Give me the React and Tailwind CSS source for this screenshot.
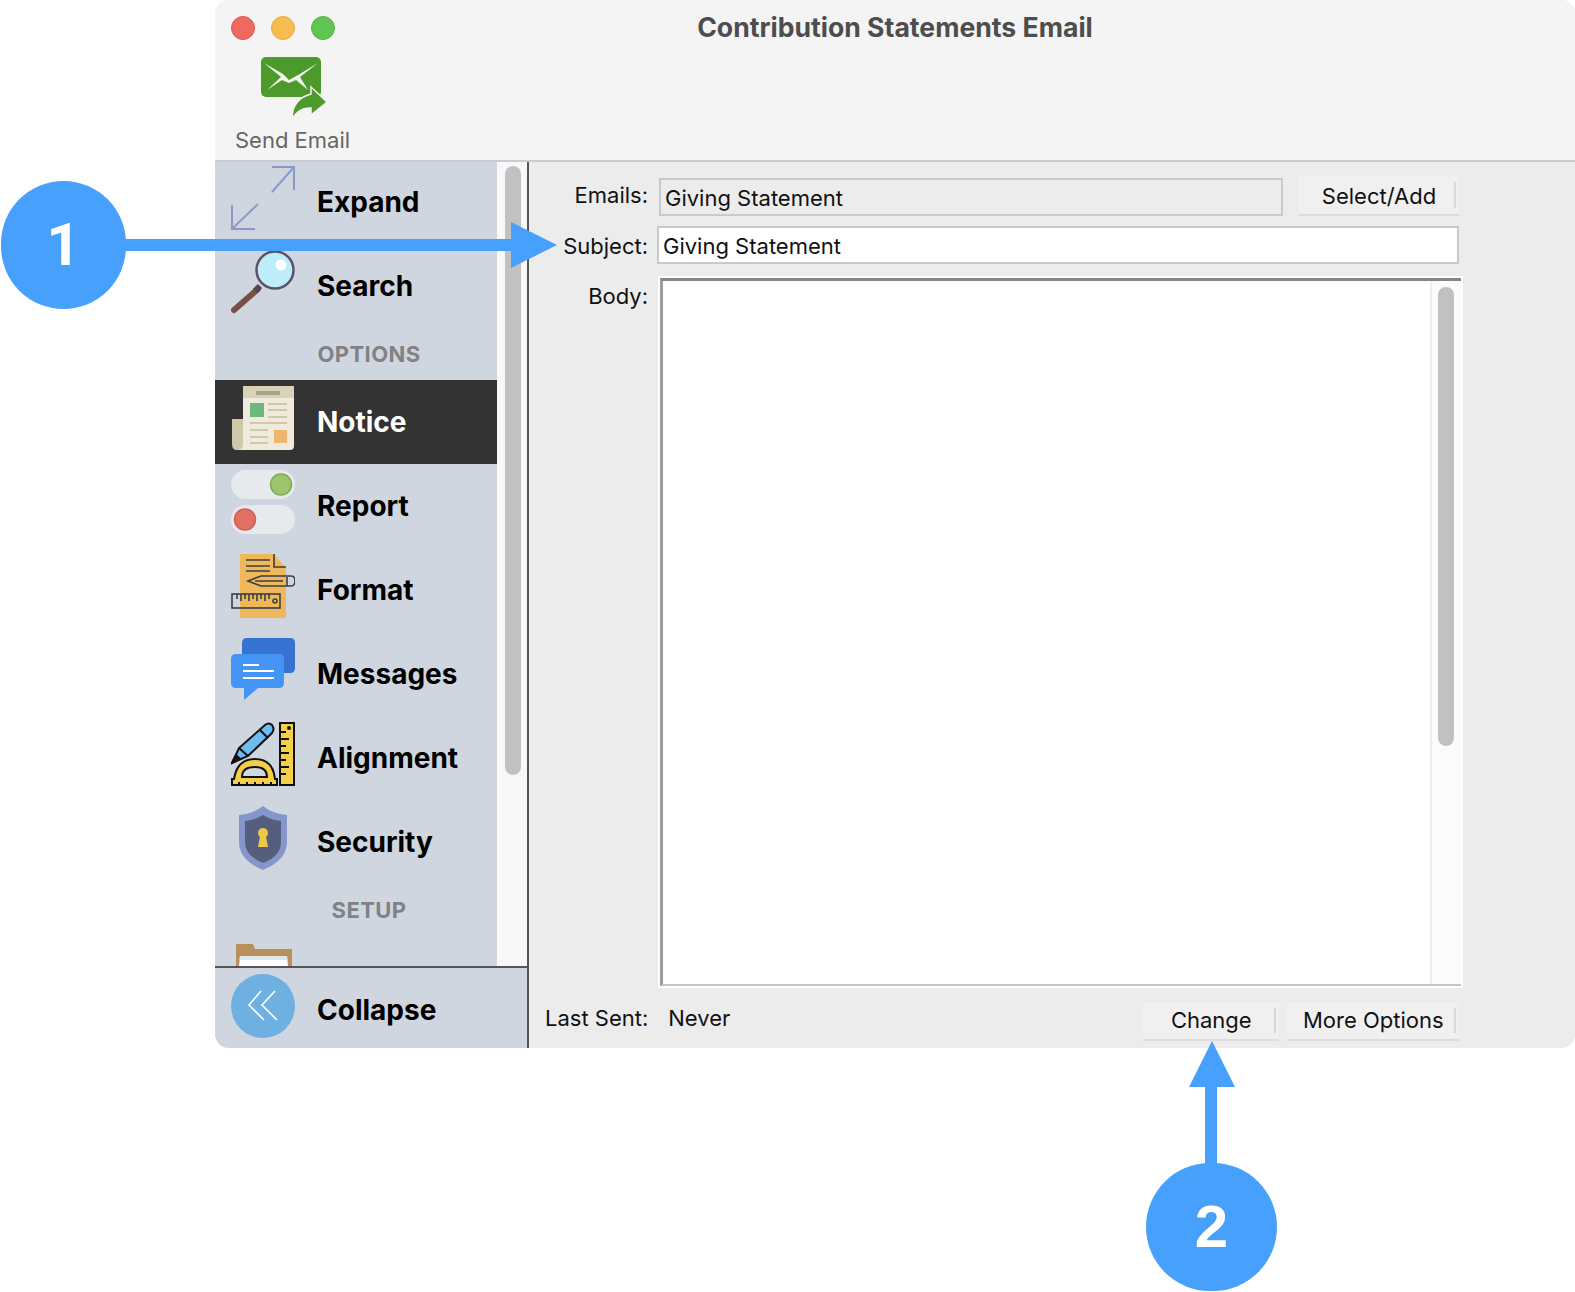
import React from 'react';

const ExpandIcon = () => (
  <svg width="64" height="64" viewBox="0 0 64 64" fill="none" stroke="#8a98cc" strokeWidth="2">
    <path d="M41 26 L63 1 M41 1 H63 V24" />
    <path d="M27 38 L1 63 M1 39 V63 H24" />
  </svg>
);

const SearchIcon = () => (
  <svg width="64" height="64" viewBox="0 0 64 64" fill="none">
    <path d="M3 60 L27 39" stroke="#7a4f45" strokeWidth="6" strokeLinecap="round" />
    <path d="M24 41 L29 36" stroke="#4f4650" strokeWidth="6" />
    <circle cx="44" cy="20" r="18.5" fill="#bdecfb" stroke="#5b5266" strokeWidth="2.5" />
    <circle cx="50" cy="15" r="5.5" fill="#ffffff" />
  </svg>
);

const NoticeIcon = () => (
  <svg width="64" height="64" viewBox="0 0 64 64" fill="none">
    <path d="M1 33 H14 V64 H6 Q1 64 1 58 Z" fill="#cfc9ac" />
    <path d="M12 0 H63 V60 Q63 64 59 64 H6 Q12 64 12 58 Z" fill="#efeadb" />
    <path d="M12 0 H63 V12 H12 Z" fill="#d8d2b6" />
    <rect x="25" y="5" width="24" height="4" fill="#a9a48e" />
    <rect x="19" y="17" width="14" height="14" fill="#6eb87e" />
    <rect x="43" y="44" width="13" height="13" fill="#eeb66e" />
    <path d="M37 18 H56 M37 24 H56 M37 31 H56 M19 37 H56 M19 44 H37 M19 51 H37 M19 57 H37" stroke="#cfc9ac" strokeWidth="2" />
  </svg>
);

const ReportIcon = () => (
  <svg width="64" height="64" viewBox="0 0 64 64" fill="none">
    <rect x="0" y="0" width="64" height="29" rx="14.5" fill="#e6eaec" />
    <rect x="0" y="35" width="64" height="29" rx="14.5" fill="#e6eaec" />
    <circle cx="50" cy="14.5" r="10.5" fill="#9dc56d" stroke="#7dac55" strokeWidth="1.5" />
    <circle cx="14" cy="49.5" r="10.5" fill="#e17063" stroke="#cf5e53" strokeWidth="1.5" />
  </svg>
);

const FormatIcon = () => (
  <svg width="64" height="64" viewBox="0 0 64 64" fill="none">
    <path d="M9 0 H43 L55 14 V64 H9 Z" fill="#efb95b" />
    <g stroke="#3d3d45" strokeWidth="1.6">
      <path d="M15 6 H39 M15 12 H39 M15 17 H39" />
      <path d="M43 0 V13 H55" />
      <path d="M30 22 H60 Q64 22 64 27 Q64 32 60 32 H30 L17 27 Z" />
      <path d="M24 27 H52 M56 23 V32" />
      <rect x="1" y="40" width="48" height="14" />
      <path d="M6 40 V45 M10 40 V47 M14 40 V45 M18 40 V47 M22 40 V45 M26 40 V47 M30 40 V45 M34 40 V47 M38 40 V45" />
      <circle cx="44" cy="47" r="2" />
    </g>
  </svg>
);

const MessagesIcon = () => (
  <svg width="64" height="64" viewBox="0 0 64 64" fill="none">
    <path d="M16 0 H59 Q64 0 64 5 V30 Q64 35 59 35 H16 Q11 35 11 30 V5 Q11 0 16 0 Z" fill="#3672d1" />
    <path d="M5 16 H48 Q53 16 53 21 V45 Q53 50 48 50 H27 L13 62 V50 H5 Q0 50 0 45 V21 Q0 16 5 16 Z" fill="#4394f5" />
    <path d="M12 27 H28 M12 33 H43 M12 40 H43" stroke="#ffffff" strokeWidth="2" />
  </svg>
);

const AlignmentIcon = () => (
  <svg width="64" height="64" viewBox="0 0 64 64" fill="none" stroke="#111111" strokeWidth="2">
    <rect x="49" y="1" width="14" height="62" fill="#f5cf47" />
    <path d="M49 10 H55 M49 17 H58 M49 24 H55 M49 31 H58 M49 38 H55 M49 45 H58 M49 52 H55" />
    <circle cx="58" cy="6" r="1" fill="#111111" />
    <path d="M1 41 L8 26 L34 3 Q38 0 41 3 Q44 7 41 11 L17 34 Z" fill="#6cbcf0" />
    <path d="M8 26 L17 34 M29 8 L37 16" />
    <path d="M1 41 L5 33 L9 37 Z" fill="#111111" />
    <path d="M1 63 V57 H3 Q6 37 24 37 Q42 37 44 57 H46 V63 Z" fill="#f5cf47" />
    <path d="M11 55 Q11 45 24 45 Q36 45 36 55 Z" fill="#d2d8e0" />
    <path d="M8 63 V60 M16 63 V60 M24 63 V60 M32 63 V60 M40 63 V60" />
  </svg>
);

const SecurityIcon = () => (
  <svg width="64" height="64" viewBox="0 0 64 64" fill="none">
    <path d="M32 0 Q42 8 56 9 V36 Q56 54 32 64 Q8 54 8 36 V9 Q22 8 32 0 Z" fill="#8596cb" />
    <path d="M32 9 Q40 14 50 15 V36 Q50 50 32 57 Q14 50 14 36 V15 Q24 14 32 9 Z" fill="#555e7c" />
    <circle cx="32" cy="27" r="5" fill="#efc846" />
    <path d="M29.5 28 H34.5 L37 41 H27 Z" fill="#efc846" />
  </svg>
);

const FolderIcon = () => (
  <svg width="58" height="22" viewBox="0 0 58 22" fill="none" className="block">
    <path d="M0 22 V0 H17 L19 5 H56 V22 Z" fill="#b98f5c" />
    <path d="M3 22 L4 12 H51 L52 22 Z" fill="#ffffff" />
    <path d="M4 12 H51 L51.5 16 H3.5 Z" fill="#dfe7ea" />
  </svg>
);

const SendEmailIcon = () => (
  <svg width="66" height="62" viewBox="0 0 66 62" fill="none" className="block">
    <rect x="0" y="0" width="60" height="40" rx="5" fill="#4c9a2a" />
    <path d="M3 6 L22 17 L28 23 L37 18 L57 6 L39 20 L47 33 L35 23 L28 26 L21 23 L6 33 L20 20 Z" fill="#f3f7f0" />
    <path d="M50 30 L66 45 L50 58 V51 Q38 50 31 62 Q31 42 50 37 Z" fill="#4c9a2a" stroke="#f4f4f4" strokeWidth="1.5" />
  </svg>
);

const CollapseIcon = () => (
  <svg width="64" height="64" viewBox="0 0 64 64" fill="none" className="block">
    <circle cx="32" cy="32" r="32" fill="#6fb0e2" />
    <path d="M30 18 L18 32 L33 47 M44 18 L31 32 L46 47" stroke="#ffffff" strokeWidth="1.6" transform="translate(0 -1)" />
  </svg>
);

const navTop = [
  { label: 'Expand', icon: <ExpandIcon /> },
  { label: 'Search', icon: <SearchIcon /> },
];

const navOptions = [
  { label: 'Notice', icon: <NoticeIcon />, active: true },
  { label: 'Report', icon: <ReportIcon /> },
  { label: 'Format', icon: <FormatIcon /> },
  { label: 'Messages', icon: <MessagesIcon /> },
  { label: 'Alignment', icon: <AlignmentIcon /> },
  { label: 'Security', icon: <SecurityIcon /> },
];

const NavRow = ({ item }) => (
  <div className={`flex h-[84px] shrink-0 items-start pl-4 ${item.active ? 'bg-[#333333] text-white' : 'text-black'}`}>
    <div className="mt-[6px] h-16 w-16 shrink-0">{item.icon}</div>
    <span className="ml-[22px] self-center text-[28px] leading-none font-bold">{item.label}</span>
  </div>
);

const SectionLabel = ({ children }) => (
  <div className="flex h-[52px] shrink-0 items-center justify-center pl-[26px] text-[22px] font-bold tracking-[0.4px] text-[#808285]">
    {children}
  </div>
);

const MacButton = ({ className, children }) => (
  <button className={`relative flex items-center justify-center border-b-2 border-[#dcdcdc] bg-[#f0f0f0] text-[22px] text-[#111111] ${className}`}>
    {children}
    <span className="absolute top-[6px] right-[3px] bottom-[6px] w-[2px] bg-[#d8d8d8]" />
  </button>
);

export default function App() {
  return (
    <div className="relative h-[1292px] w-[1575px] overflow-hidden bg-white font-['Inter',sans-serif]">
      <div className="ml-[215px] flex h-[1048px] flex-col overflow-hidden rounded-[14px] bg-[#ececec]">
        {/* Title bar */}
        <div className="relative h-[162px] shrink-0 border-b-2 border-[#c9cdd2] bg-[#f4f4f4]">
          <div className="flex h-[56px] items-center gap-4 pl-4">
            <span className="h-6 w-6 rounded-full border border-[#e0564c] bg-[#ee6a5f]" />
            <span className="h-6 w-6 rounded-full border border-[#e9a93c] bg-[#f5bd4f]" />
            <span className="h-6 w-6 rounded-full border border-[#52b44a] bg-[#61c554]" />
          </div>
          <div className="absolute top-[11px] right-0 left-0 text-center text-[26.6px] leading-8 font-bold text-[#4d4d4d]">
            Contribution Statements Email
          </div>
          <div className="pt-px pl-[46px]">
            <SendEmailIcon />
          </div>
          <div className="mt-[9px] pl-[20px] text-[22px] leading-6 text-[#666666]">Send Email</div>
        </div>

        <div className="flex min-h-0 flex-1">
          {/* Sidebar */}
          <div className="flex w-[314px] shrink-0 flex-col border-r-2 border-[#555555]">
            <div className="flex min-h-0 flex-1">
              <div className="-mt-[2px] flex min-w-0 flex-1 flex-col overflow-hidden bg-[#d0d6df]">
                {navTop.map((item) => <NavRow key={item.label} item={item} />)}
                <SectionLabel>OPTIONS</SectionLabel>
                {navOptions.map((item) => <NavRow key={item.label} item={item} />)}
                <SectionLabel>SETUP</SectionLabel>
                <div className="pt-[8px] pl-[21px]"><FolderIcon /></div>
              </div>
              <div className="w-[30px] shrink-0 bg-[#f8f8f8] pt-[4px] pl-2">
                <div className="h-[609px] w-4 rounded-lg bg-[#c1c1c1]" />
              </div>
            </div>
            <div className="flex h-[82px] shrink-0 items-start border-t-2 border-[#555555] bg-[#d0d6df] pl-4">
              <div className="mt-[6px] shrink-0"><CollapseIcon /></div>
              <span className="mt-[26px] ml-[22px] text-[28px] leading-8 font-bold text-black">Collapse</span>
            </div>
          </div>

          {/* Form */}
          <div className="flex min-w-0 flex-1 flex-col pt-[14px] text-[22px] text-[#111111]">
            <div className="flex h-10 items-start">
              <span className="w-[119px] pt-[5px] text-right leading-7">Emails:</span>
              <div className="mt-[2px] ml-[11px] flex h-[38px] w-[624px] items-center border-2 border-[#c9c9c9] bg-[#ececec] pt-[2px] pl-[4px]">Giving Statement</div>
              <MacButton className="ml-[16px] h-10 w-40 pt-[2px]">Select/Add</MacButton>
            </div>
            <div className="mt-[10px] flex h-[38px] items-center">
              <span className="w-[119px] pt-[2px] text-right leading-7">Subject:</span>
              <div className="ml-[9px] flex h-[38px] w-[802px] items-center border-2 border-[#c9c9c9] bg-white pt-[2px] pl-[4px]">Giving Statement</div>
            </div>
            <div className="mt-[12px] flex items-start">
              <span className="w-[119px] pt-[6px] text-right leading-7">Body:</span>
              <div className="ml-[10px] flex h-[712px] w-[805px] border-2 border-white">
                <div className="flex flex-1 border-t-[3px] border-b-2 border-l-[3px] border-t-[#858585] border-b-[#c4c4c4] border-l-[#9c9c9c] bg-white">
                  <div className="flex-1" />
                  <div className="w-[31px] border-l-2 border-[#eeeeee] bg-[#fbfbfb] pt-[6px] pl-[6px]">
                    <div className="h-[459px] w-4 rounded-lg bg-[#c1c1c1]" />
                  </div>
                </div>
              </div>
            </div>
            <div className="mt-[12px] flex h-[39px] items-start">
              <span className="mt-[4px] ml-[16px] leading-7">Last Sent:</span>
              <span className="mt-[4px] ml-[20px] leading-7">Never</span>
              <MacButton className="mt-[2px] ml-[413px] h-[39px] w-[136px]">Change</MacButton>
              <MacButton className="mt-[2px] ml-2 h-[39px] w-[172px]">More Options</MacButton>
            </div>
          </div>
        </div>
      </div>

      {/* Callout 1 */}
      <div className="absolute top-[181px] left-px flex h-[128px] w-[125px] items-center justify-center rounded-full bg-[#47a0fb] font-['Roboto',sans-serif] text-[60px] font-bold text-white">1</div>
      <div className="absolute top-[239px] left-[125px] h-3 w-[390px] bg-[#47a0fb]" />
      <svg className="absolute top-[222px] left-[511px]" width="46" height="46" viewBox="0 0 46 46">
        <path d="M0 0 L46 23 L0 46 Z" fill="#47a0fb" />
      </svg>

      {/* Callout 2 */}
      <div className="absolute top-[1163px] left-[1146px] flex h-[128px] w-[131px] items-center justify-center rounded-full bg-[#47a0fb] font-['Liberation_Sans',sans-serif] text-[60px] font-bold text-white">2</div>
      <div className="absolute top-[1085px] left-[1205px] h-[80px] w-3 bg-[#47a0fb]" />
      <svg className="absolute top-[1041px] left-[1189px]" width="46" height="46" viewBox="0 0 46 46">
        <path d="M23 0 L46 46 L0 46 Z" fill="#47a0fb" />
      </svg>
    </div>
  );
}
